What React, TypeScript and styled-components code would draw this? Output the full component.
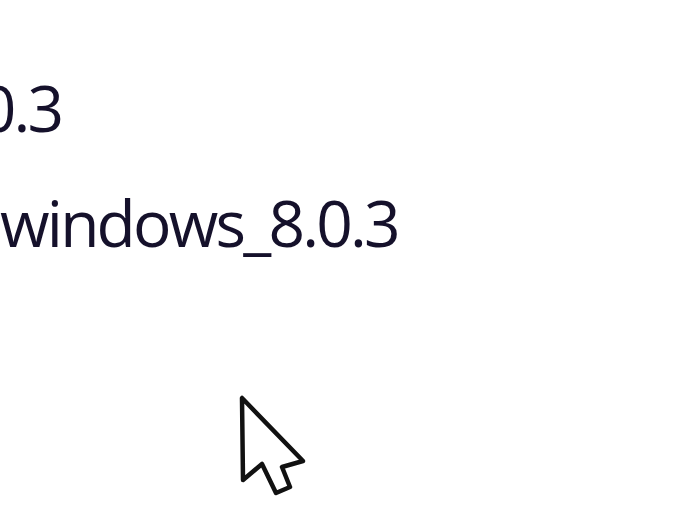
import React from 'react';
import styled, { createGlobalStyle } from 'styled-components';

const GlobalStyle = createGlobalStyle`
    html, body {
        margin: 0;
        padding: 0;
        background: #ffffff;
    }
`;

const Page = styled.div`
    position: relative;
    width: 690px;
    height: 518px;
    overflow: hidden;
    background: #ffffff;
    padding-top: 50px;
    box-sizing: border-box;
`;

const FileName = styled.div<{ $shift: number }>`
    font-family: 'Open Sans', 'Noto Sans', sans-serif;
    font-size: 64px;
    font-weight: 500;
    letter-spacing: -2.8px;
    line-height: 115px;
    color: #15112b;
    white-space: nowrap;
    margin-left: ${(p) => p.$shift}px;
`;

const Cursor = styled.svg`
    position: absolute;
    left: 236px;
    top: 392px;
`;

const App: React.FC = () => {
    return (
        <>
            <GlobalStyle />
            <Page>
                <FileName $shift={-68}>8.0.3</FileName>
                <FileName $shift={0}>windows_8.0.3</FileName>
                <Cursor width="72" height="108" viewBox="0 0 72 108">
                    <path
                        d="M6 6 L7 88 L26 72 L40 101 L54 95 L46 75 L67 69 Z"
                        fill="#ffffff"
                        stroke="#111111"
                        strokeWidth="4.5"
                        strokeLinejoin="round"
                    />
                </Cursor>
            </Page>
        </>
    );
};

export default App;
